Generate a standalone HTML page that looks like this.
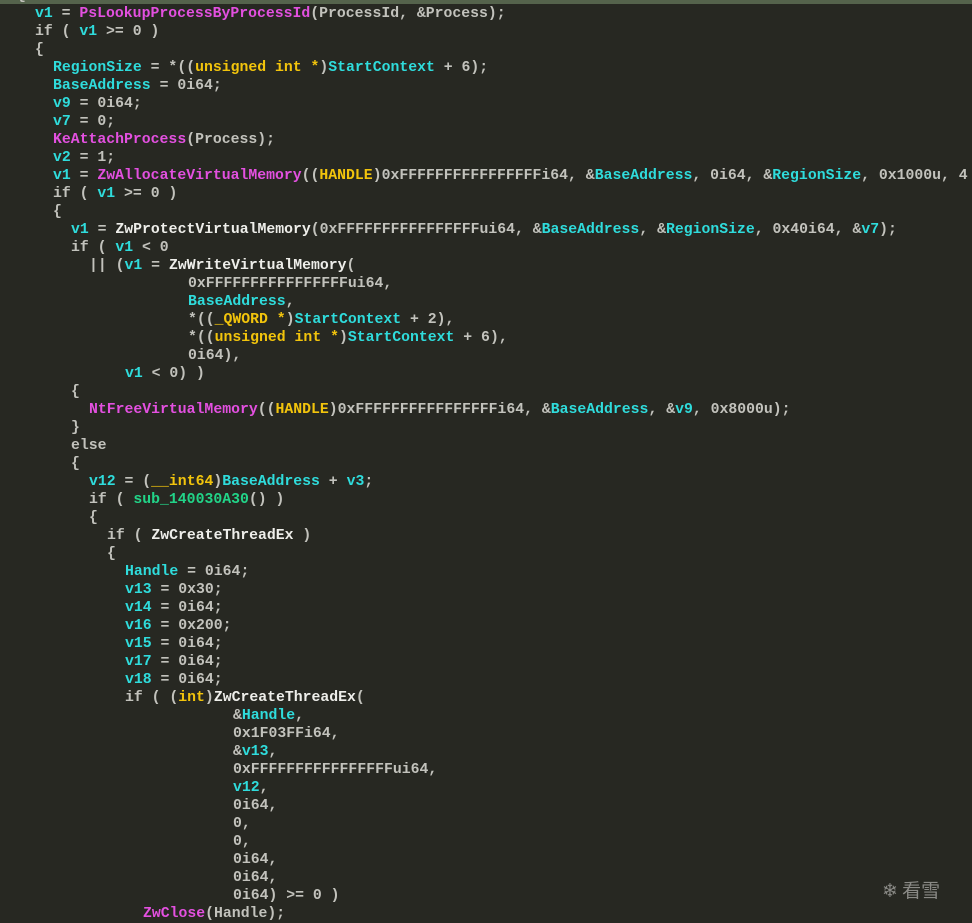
<!DOCTYPE html>
<html><head><meta charset="utf-8"><style>
html,body{margin:0;padding:0;background:#272822;width:972px;height:923px;overflow:hidden}
.bar{position:absolute;left:0;top:0;width:972px;height:4px;background:#55634c}
.l{position:absolute;white-space:pre;font-family:"Liberation Mono","DejaVu Sans Mono",monospace;font-weight:bold;font-size:14.8px;line-height:18px;color:#c2c2bc}
.c{color:#2fdcdc}.m{color:#e350e0}.y{color:#f2c40c}.g{color:#22d488}.w{color:#eeeeea}
.wm{position:absolute;left:882px;top:876px;color:#8a8a86;font-family:"Noto Sans CJK SC",sans-serif;font-size:19px}
</style></head><body>
<div class="bar"></div>
<div class="l" style="left:17px;top:-13px">{</div>
<div class="l" style="left:35px;top:5px"><span class="c">v1</span> = <span class="m">PsLookupProcessByProcessId</span>(ProcessId, &amp;Process);</div>
<div class="l" style="left:35px;top:23px">if ( <span class="c">v1</span> &gt;= 0 )</div>
<div class="l" style="left:35px;top:41px">{</div>
<div class="l" style="left:53px;top:59px"><span class="c">RegionSize</span> = *((<span class="y">unsigned int *</span>)<span class="c">StartContext</span> + 6);</div>
<div class="l" style="left:53px;top:77px"><span class="c">BaseAddress</span> = 0i64;</div>
<div class="l" style="left:53px;top:95px"><span class="c">v9</span> = 0i64;</div>
<div class="l" style="left:53px;top:113px"><span class="c">v7</span> = 0;</div>
<div class="l" style="left:53px;top:131px"><span class="m">KeAttachProcess</span>(Process);</div>
<div class="l" style="left:53px;top:149px"><span class="c">v2</span> = 1;</div>
<div class="l" style="left:53px;top:167px"><span class="c">v1</span> = <span class="m">ZwAllocateVirtualMemory</span>((<span class="y">HANDLE</span>)0xFFFFFFFFFFFFFFFFi64, &amp;<span class="c">BaseAddress</span>, 0i64, &amp;<span class="c">RegionSize</span>, 0x1000u, 4</div>
<div class="l" style="left:53px;top:185px">if ( <span class="c">v1</span> &gt;= 0 )</div>
<div class="l" style="left:53px;top:203px">{</div>
<div class="l" style="left:71px;top:221px"><span class="c">v1</span> = <span class="w">ZwProtectVirtualMemory</span>(0xFFFFFFFFFFFFFFFFui64, &amp;<span class="c">BaseAddress</span>, &amp;<span class="c">RegionSize</span>, 0x40i64, &amp;<span class="c">v7</span>);</div>
<div class="l" style="left:71px;top:239px">if ( <span class="c">v1</span> &lt; 0</div>
<div class="l" style="left:89px;top:257px">|| (<span class="c">v1</span> = <span class="w">ZwWriteVirtualMemory</span>(</div>
<div class="l" style="left:188px;top:275px">0xFFFFFFFFFFFFFFFFui64,</div>
<div class="l" style="left:188px;top:293px"><span class="c">BaseAddress</span>,</div>
<div class="l" style="left:188px;top:311px">*((<span class="y">_QWORD *</span>)<span class="c">StartContext</span> + 2),</div>
<div class="l" style="left:188px;top:329px">*((<span class="y">unsigned int *</span>)<span class="c">StartContext</span> + 6),</div>
<div class="l" style="left:188px;top:347px">0i64),</div>
<div class="l" style="left:125px;top:365px"><span class="c">v1</span> &lt; 0) )</div>
<div class="l" style="left:71px;top:383px">{</div>
<div class="l" style="left:89px;top:401px"><span class="m">NtFreeVirtualMemory</span>((<span class="y">HANDLE</span>)0xFFFFFFFFFFFFFFFFi64, &amp;<span class="c">BaseAddress</span>, &amp;<span class="c">v9</span>, 0x8000u);</div>
<div class="l" style="left:71px;top:419px">}</div>
<div class="l" style="left:71px;top:437px">else</div>
<div class="l" style="left:71px;top:455px">{</div>
<div class="l" style="left:89px;top:473px"><span class="c">v12</span> = (<span class="y">__int64</span>)<span class="c">BaseAddress</span> + <span class="c">v3</span>;</div>
<div class="l" style="left:89px;top:491px">if ( <span class="g">sub_140030A30</span>() )</div>
<div class="l" style="left:89px;top:509px">{</div>
<div class="l" style="left:107px;top:527px">if ( <span class="w">ZwCreateThreadEx</span> )</div>
<div class="l" style="left:107px;top:545px">{</div>
<div class="l" style="left:125px;top:563px"><span class="c">Handle</span> = 0i64;</div>
<div class="l" style="left:125px;top:581px"><span class="c">v13</span> = 0x30;</div>
<div class="l" style="left:125px;top:599px"><span class="c">v14</span> = 0i64;</div>
<div class="l" style="left:125px;top:617px"><span class="c">v16</span> = 0x200;</div>
<div class="l" style="left:125px;top:635px"><span class="c">v15</span> = 0i64;</div>
<div class="l" style="left:125px;top:653px"><span class="c">v17</span> = 0i64;</div>
<div class="l" style="left:125px;top:671px"><span class="c">v18</span> = 0i64;</div>
<div class="l" style="left:125px;top:689px">if ( (<span class="y">int</span>)<span class="w">ZwCreateThreadEx</span>(</div>
<div class="l" style="left:233px;top:707px">&amp;<span class="c">Handle</span>,</div>
<div class="l" style="left:233px;top:725px">0x1F03FFi64,</div>
<div class="l" style="left:233px;top:743px">&amp;<span class="c">v13</span>,</div>
<div class="l" style="left:233px;top:761px">0xFFFFFFFFFFFFFFFFui64,</div>
<div class="l" style="left:233px;top:779px"><span class="c">v12</span>,</div>
<div class="l" style="left:233px;top:797px">0i64,</div>
<div class="l" style="left:233px;top:815px">0,</div>
<div class="l" style="left:233px;top:833px">0,</div>
<div class="l" style="left:233px;top:851px">0i64,</div>
<div class="l" style="left:233px;top:869px">0i64,</div>
<div class="l" style="left:233px;top:887px">0i64) &gt;= 0 )</div>
<div class="l" style="left:143px;top:905px"><span class="m">ZwClose</span>(Handle);</div>
<div class="wm">❄ 看雪</div>
</body></html>
